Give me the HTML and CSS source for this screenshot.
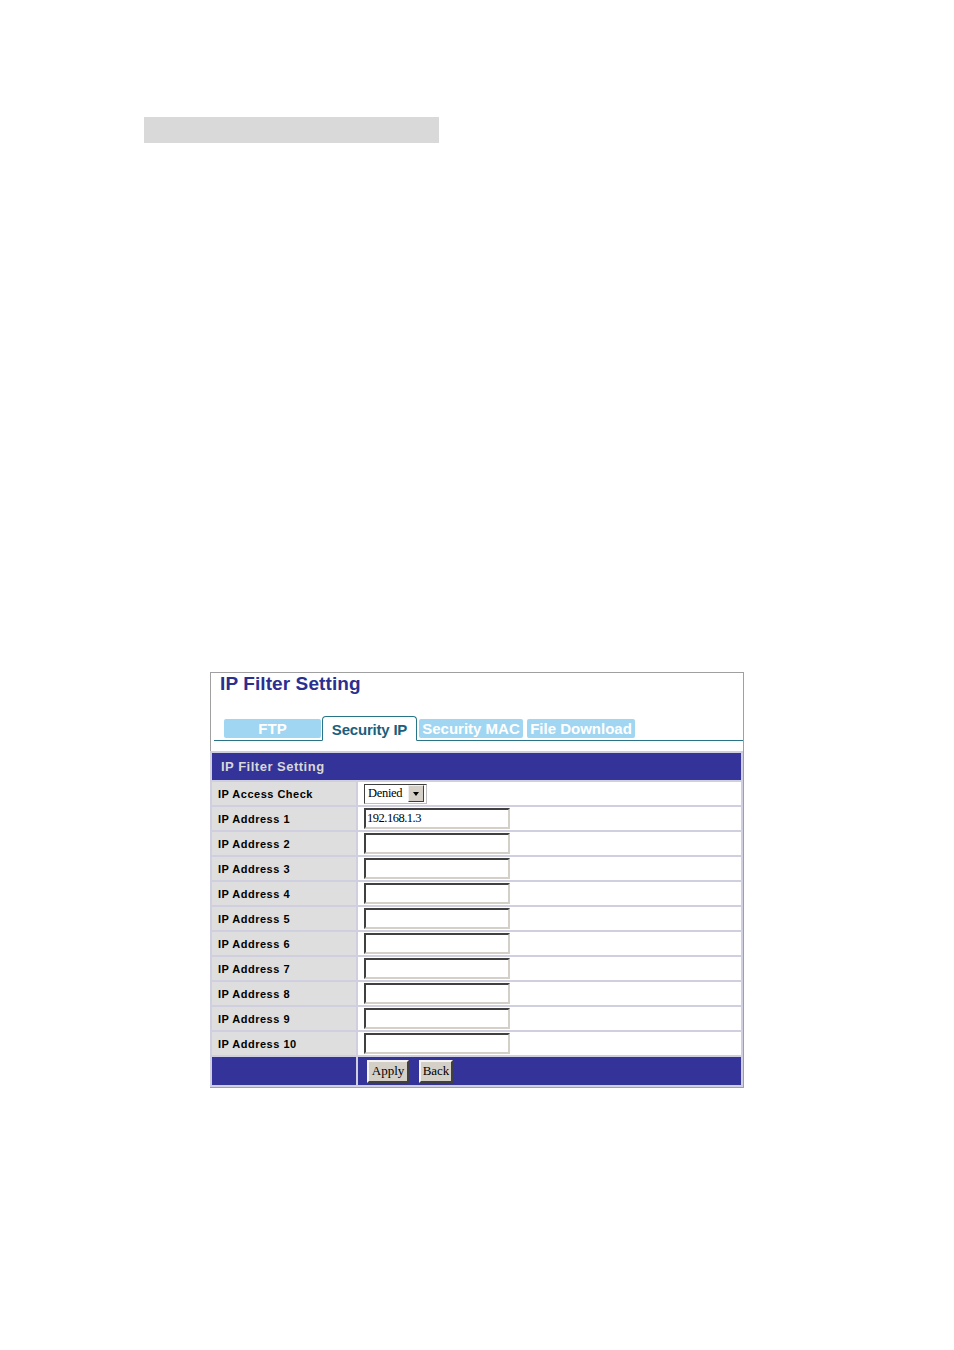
FILE: index.html
```html
<!DOCTYPE html>
<html>
<head>
<meta charset="utf-8">
<link rel="stylesheet" href="styles.css">
</head>
<body>
<div class="bar"></div>
<div class="panel">
  <h1 class="title">IP Filter Setting</h1>
  <div class="tabs">
    <div class="tab tab-ftp">FTP</div>
    <div class="tab tab-active">Security IP</div>
    <div class="tab tab-mac">Security MAC</div>
    <div class="tab tab-dl">File Download</div>
  </div>
  <table class="grid">
    <tr><th colspan="2" class="head">IP Filter Setting</th></tr>
    <tr><td class="lbl">IP Access Check</td><td class="val"><div class="select"><span class="sel-text">Denied</span><span class="sel-btn"><span class="arrow"></span></span></div></td></tr>
    <tr><td class="lbl">IP Address 1</td><td class="val"><input class="ip" type="text" value="192.168.1.3"></td></tr>
    <tr><td class="lbl">IP Address 2</td><td class="val"><input class="ip" type="text"></td></tr>
    <tr><td class="lbl">IP Address 3</td><td class="val"><input class="ip" type="text"></td></tr>
    <tr><td class="lbl">IP Address 4</td><td class="val"><input class="ip" type="text"></td></tr>
    <tr><td class="lbl">IP Address 5</td><td class="val"><input class="ip" type="text"></td></tr>
    <tr><td class="lbl">IP Address 6</td><td class="val"><input class="ip" type="text"></td></tr>
    <tr><td class="lbl">IP Address 7</td><td class="val"><input class="ip" type="text"></td></tr>
    <tr><td class="lbl">IP Address 8</td><td class="val"><input class="ip" type="text"></td></tr>
    <tr><td class="lbl">IP Address 9</td><td class="val"><input class="ip" type="text"></td></tr>
    <tr><td class="lbl">IP Address 10</td><td class="val"><input class="ip" type="text"></td></tr>
    <tr class="foot"><td class="foot-l"></td><td class="foot-r"><button class="btn btn-apply">Apply</button><button class="btn btn-back">Back</button></td></tr>
  </table>
</div>
</body>
</html>
```
FILE: styles.css
```css
html, body {
  margin: 0;
  padding: 0;
  background: #ffffff;
  font-family: "Liberation Sans", Arial, sans-serif;
}
.bar {
  margin: 117px 0 0 144px;
  width: 295px;
  height: 26px;
  background: #d9d9d9;
}
.panel {
  margin: 529px 0 0 210px;
  width: 532px;
  border: 1px solid #a0a0a0;
}
.title {
  margin: 0;
  padding: 0 0 0 9px;
  height: 24px;
  line-height: 22px;
  font-size: 19px;
  font-weight: bold;
  color: #2b2f8f;
  letter-spacing: 0.1px;
}
.tabs {
  display: flex;
  align-items: flex-end;
  margin: 19px 0 0 3px;
  padding-left: 10px;
  height: 24px;
  border-bottom: 1px solid #2a7487;
}
.tab {
  font-size: 15px;
  font-weight: bold;
  color: #ffffff;
  background: #a0d6f2;
  height: 19px;
  line-height: 19px;
  text-align: center;
  margin-bottom: 2px;
  border-radius: 2px;
}
.tab-ftp { width: 97px; margin-right: 1px; }
.tab-active {
  width: 93px;
  height: 23px;
  line-height: 25px;
  margin-bottom: -1px;
  background: #ffffff;
  color: #1b5f7c;
  border: 1px solid #2a7487;
  border-bottom: 1px solid #ffffff;
  border-radius: 4px 4px 0 0;
  margin-right: 2px;
  letter-spacing: -0.2px;
}
.tab-mac { width: 104px; margin-right: 4px; }
.tab-dl { width: 108px; }
.grid {
  margin: 10px 0 0 -1px;
  width: 533px;
  border-collapse: separate;
  border-spacing: 2px;
  background: #cfcfe0;
}
.grid td, .grid th {
  padding: 0;
}
.head {
  background: #333399;
  color: #d8d8d8;
  text-align: left;
  font-size: 13px;
  font-weight: bold;
  height: 27px;
  padding-left: 9px !important;
  letter-spacing: 0.5px;
}
.lbl {
  width: 144px;
  height: 23px;
  background: #dedede;
  font-size: 11px;
  font-weight: bold;
  color: #000000;
  padding-left: 6px !important;
  box-sizing: border-box;
  letter-spacing: 0.5px;
}
.val {
  background: #ffffff;
  height: 23px;
  padding-left: 6px !important;
}
.ip {
  display: block;
  box-sizing: border-box;
  width: 146px;
  height: 21px;
  margin: 0;
  padding: 0 1px;
  border: 2px solid;
  border-color: #404040 #d4d0c8 #d4d0c8 #404040;
  font-family: "Liberation Serif", "Times New Roman", serif;
  font-size: 12.5px;
  color: #000;
  background: #fff;
  letter-spacing: -0.5px;
}
.select {
  display: flex;
  align-items: center;
  box-sizing: border-box;
  width: 63px;
  height: 20px;
  border: 1px solid;
  border-color: #404040 #c0c0c0 #c0c0c0 #404040;
  background: #fff;
}
.sel-text {
  flex: 1;
  font-family: "Liberation Serif", "Times New Roman", serif;
  font-size: 12.5px;
  padding-left: 3px;
  letter-spacing: -0.3px;
}
.sel-btn {
  display: flex;
  align-items: center;
  justify-content: center;
  width: 14px;
  height: 15px;
  margin-right: 2px;
  background: #d4d0c8;
  border: 1px solid;
  border-color: #f0f0f0 #404040 #404040 #f0f0f0;
}
.arrow {
  width: 0;
  height: 0;
  border-left: 3.5px solid transparent;
  border-right: 3.5px solid transparent;
  border-top: 4px solid #000;
}
.foot-l {
  background: #333399;
  height: 28px;
}
.foot-r {
  background: #333399;
  height: 28px;
  padding-left: 9px !important;
}
.btn {
  box-sizing: border-box;
  height: 23px;
  padding: 0;
  margin: 0;
  vertical-align: middle;
  background: #d4d0c8;
  border: 2px solid;
  border-color: #f4f4f4 #404040 #404040 #f4f4f4;
  font-family: "Liberation Serif", "Times New Roman", serif;
  font-size: 13px;
  color: #000;
}
.btn-apply { width: 42px; margin-right: 10px; }
.btn-back { width: 34px; }
```
